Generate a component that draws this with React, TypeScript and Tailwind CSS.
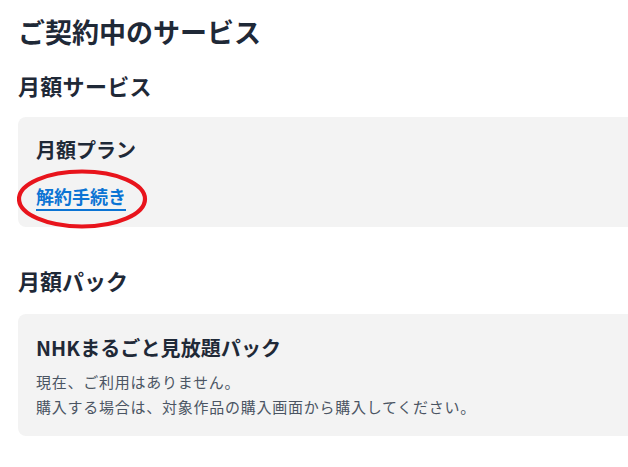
import React from "react";

export default function App() {
  return (
    <div
      className="min-h-[467px] w-[628px] overflow-hidden bg-white pl-[18px] pt-[14px] text-[#1f2937]"
      style={{ fontFamily: '"Noto Sans CJK JP", "Noto Sans", sans-serif' }}
    >
      <h1 className="text-[27px] font-bold leading-[36px]">ご契約中のサービス</h1>

      <h2 className="mt-[19px] text-[22px] font-bold leading-[32px] tracking-[0.3px]">月額サービス</h2>

      <div className="relative mt-[16px] w-[640px] rounded-[8px] bg-[#f3f3f3] pl-[18px] pt-[19px] pb-[18px]">
        <h3 className="text-[20px] font-bold leading-[28px]">月額プラン</h3>
        <a
          href="#"
          className="mt-[19px] block w-max text-[18px] font-bold leading-[26px] text-[#0b74d4] underline decoration-[1.5px] underline-offset-[5px]"
        >
          解約手続き
        </a>
        <svg
          className="pointer-events-none absolute left-[-1px] top-[52px]"
          width="132"
          height="61"
          viewBox="0 0 132 61"
        >
          <ellipse
            cx="65"
            cy="30"
            rx="63"
            ry="27.5"
            fill="none"
            stroke="#e8141c"
            strokeWidth="4.2"
          />
        </svg>
      </div>

      <h2 className="mt-[37px] text-[22px] font-bold leading-[32px]">月額パック</h2>

      <div className="mt-[18px] w-[640px] rounded-[8px] bg-[#f3f3f3] pl-[18px] pt-[20px] pb-[17px]">
        <h3 className="text-[20px] font-bold leading-[28px] tracking-[0.1px]">NHKまるごと見放題パック</h3>
        <div className="mt-[7px] text-[15px] leading-[25px] tracking-[0.75px] text-[#4b5563]">
          <p>現在、ご利用はありません。</p>
          <p>購入する場合は、対象作品の購入画面から購入してください。</p>
        </div>
      </div>
    </div>
  );
}
